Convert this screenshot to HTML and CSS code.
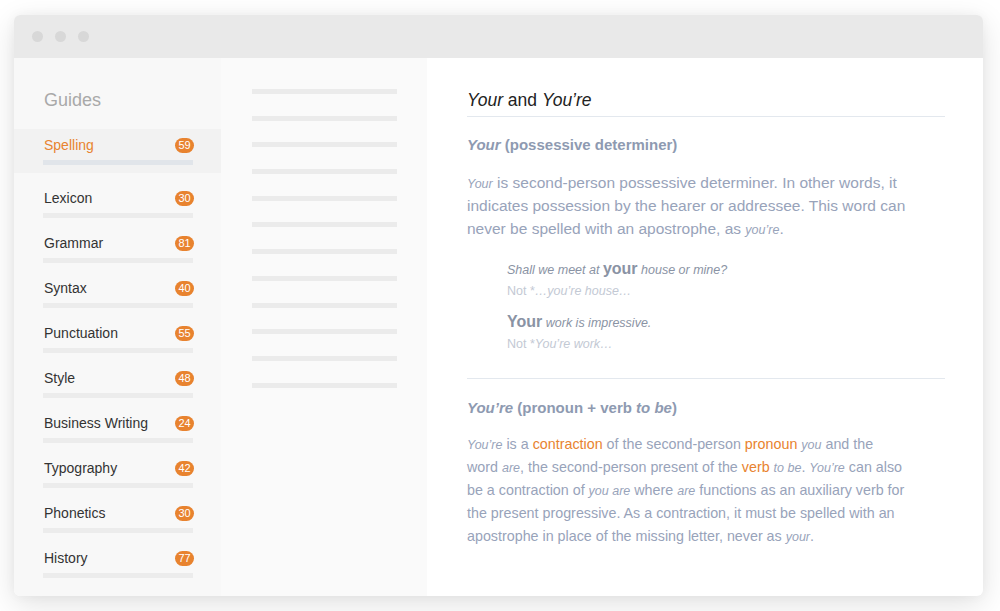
FILE: index.html
```html
<!DOCTYPE html>
<html>
<head>
<meta charset="utf-8">
<link rel="stylesheet" href="styles.css">
</head>
<body>
<div class="window">
  <div class="titlebar">
    <span class="dot"></span><span class="dot"></span><span class="dot"></span>
  </div>
  <div class="body">
    <aside class="sidebar">
      <div class="guides">Guides</div>
      <ul class="nav">
        <li class="item active"><div class="row"><span class="label">Spelling</span><span class="badge">59</span></div><div class="bar"></div></li>
        <li class="item"><div class="row"><span class="label">Lexicon</span><span class="badge">30</span></div><div class="bar"></div></li>
        <li class="item"><div class="row"><span class="label">Grammar</span><span class="badge">81</span></div><div class="bar"></div></li>
        <li class="item"><div class="row"><span class="label">Syntax</span><span class="badge">40</span></div><div class="bar"></div></li>
        <li class="item"><div class="row"><span class="label">Punctuation</span><span class="badge">55</span></div><div class="bar"></div></li>
        <li class="item"><div class="row"><span class="label">Style</span><span class="badge">48</span></div><div class="bar"></div></li>
        <li class="item"><div class="row"><span class="label">Business Writing</span><span class="badge">24</span></div><div class="bar"></div></li>
        <li class="item"><div class="row"><span class="label">Typography</span><span class="badge">42</span></div><div class="bar"></div></li>
        <li class="item"><div class="row"><span class="label">Phonetics</span><span class="badge">30</span></div><div class="bar"></div></li>
        <li class="item"><div class="row"><span class="label">History</span><span class="badge">77</span></div><div class="bar"></div></li>
      </ul>
    </aside>
    <div class="middle">
      <div class="line"></div><div class="line"></div><div class="line"></div><div class="line"></div>
      <div class="line"></div><div class="line"></div><div class="line"></div><div class="line"></div>
      <div class="line"></div><div class="line"></div><div class="line"></div><div class="line"></div>
    </div>
    <main class="content">
      <h1 class="title"><i>Your</i> and <i>You’re</i></h1>
      <h2 class="sub"><i>Your</i> (possessive determiner)</h2>
      <p class="para"><i class="sm">Your</i> is second-person possessive determiner. In other words, it indicates possession by the hearer or addressee. This word can never be spelled with an apostrophe, as <i class="sm">you’re</i>.</p>
      <div class="examples">
        <div class="ex">
          <div class="ex-main">Shall we meet at <b class="big">your</b> house or mine?</div>
          <div class="ex-not">Not *<i>…you’re house…</i></div>
        </div>
        <div class="ex">
          <div class="ex-main"><b class="big">Your</b> work is impressive.</div>
          <div class="ex-not">Not *<i>You’re work…</i></div>
        </div>
      </div>
      <hr class="divider">
      <h2 class="sub"><i>You’re</i> (pronoun + verb <i>to be</i>)</h2>
      <p class="para para-small"><i class="sm">You’re</i> is a <span class="link">contraction</span> of the second-person <span class="link">pronoun</span> <i class="sm">you</i> and the word <i class="sm">are</i>, the second-person present of the <span class="link">verb</span> <i class="sm">to be</i>. <i class="sm">You’re</i> can also be a contraction of <i class="sm">you are</i> where <i class="sm">are</i> functions as an auxiliary verb for the present progressive. As a contraction, it must be spelled with an apostrophe in place of the missing letter, never as <i class="sm">your</i>.</p>
    </main>
  </div>
</div>
</body>
</html>
```

FILE: styles.css
```css
* { box-sizing: border-box; }
html, body { margin: 0; padding: 0; background: #ffffff; }
body {
  font-family: "Liberation Sans", Arial, sans-serif;
  width: 1000px;
  height: 611px;
  overflow: hidden;
  padding: 15px 17px 0 14px;
}
.window {
  width: 969px;
  height: 581px;
  border-radius: 6px;
  overflow: hidden;
  background: #fff;
  box-shadow: 0 8px 30px rgba(0, 0, 0, 0.12), 0 0 12px rgba(0, 0, 0, 0.04);
  display: flex;
  flex-direction: column;
}
.titlebar {
  height: 43px;
  background: #e9e9e9;
  display: flex;
  align-items: center;
  gap: 12px;
  padding-left: 18px;
  flex-shrink: 0;
}
.dot {
  width: 11px;
  height: 11px;
  border-radius: 50%;
  background: #d8d8d8;
}
.body {
  flex: 1;
  display: flex;
}
.sidebar {
  width: 207px;
  background: #f8f8f8;
  padding-top: 30px;
}
.guides {
  font-size: 18px;
  line-height: 24px;
  color: #a9a9a9;
  padding-left: 30px;
  margin-bottom: 17px;
}
.nav { list-style: none; margin: 0; padding: 0; }
.item {
  padding: 6px 28px 9px 29px;
  height: 45px;
}
.item.active {
  background: #f2f2f2;
  height: 44px;
  padding-bottom: 8px;
  margin-bottom: 9px;
}
.row {
  display: flex;
  justify-content: space-between;
  align-items: center;
  height: 20px;
  padding-left: 1px;
}
.label {
  font-size: 14px;
  color: #333;
}
.active .label { color: #e8832f; }
.badge {
  background: #e8832f;
  color: #fff;
  font-size: 11px;
  line-height: 14px;
  height: 15px;
  min-width: 19px;
  padding: 0 3px;
  border-radius: 8px;
  text-align: center;
  margin-right: -1px;
}
.bar {
  height: 5px;
  margin-top: 5px;
  background: #ececec;
}
.active .bar { background: #e1e5ea; }
.middle {
  width: 206px;
  background: #fafafa;
  padding: 31px 30px 0 31px;
  display: flex;
  flex-direction: column;
  gap: 21.7px;
}
.line {
  height: 5px;
  width: 145px;
  background: #ebebeb;
}
.content {
  flex: 1;
  padding: 30px 38px 0 40px;
  color: #98a3ba;
}
.title {
  margin: 0;
  font-size: 17.5px;
  font-weight: normal;
  line-height: 24px;
  color: #222;
  padding-bottom: 4px;
  border-bottom: 1px solid #e3e8ee;
}
.sub {
  margin: 18px 0 0;
  font-size: 15px;
  line-height: 20px;
  font-weight: bold;
  color: #8e9ab1;
}
.para {
  margin: 16px 0 0;
  font-size: 15.5px;
  line-height: 23px;
  color: #98a3ba;
  max-width: 442px;
}
.para-small { font-size: 14.3px; max-width: 440px; }
.sm { font-size: 12.5px; line-height: 1; }
.link { color: #e8832f; }
.examples {
  margin: 20px 0 0 40px;
}
.ex + .ex { margin-top: 12px; }
.ex-main {
  font-size: 12.5px;
  line-height: 21px;
  font-style: italic;
  color: #8a93a4;
}
.big {
  font-style: normal;
  font-size: 16px;
  line-height: 1;
  font-weight: bold;
  color: #8a93a4;
}
.ex-not {
  font-size: 12.5px;
  line-height: 20px;
  color: #c3c9d4;
}
.divider {
  border: 0;
  border-top: 1px solid #e3e8ee;
  margin: 24px 0 0;
  height: 0;
}
.divider + .sub { margin-top: 19px; }
.divider + .sub + .para { margin-top: 15px; }
```
